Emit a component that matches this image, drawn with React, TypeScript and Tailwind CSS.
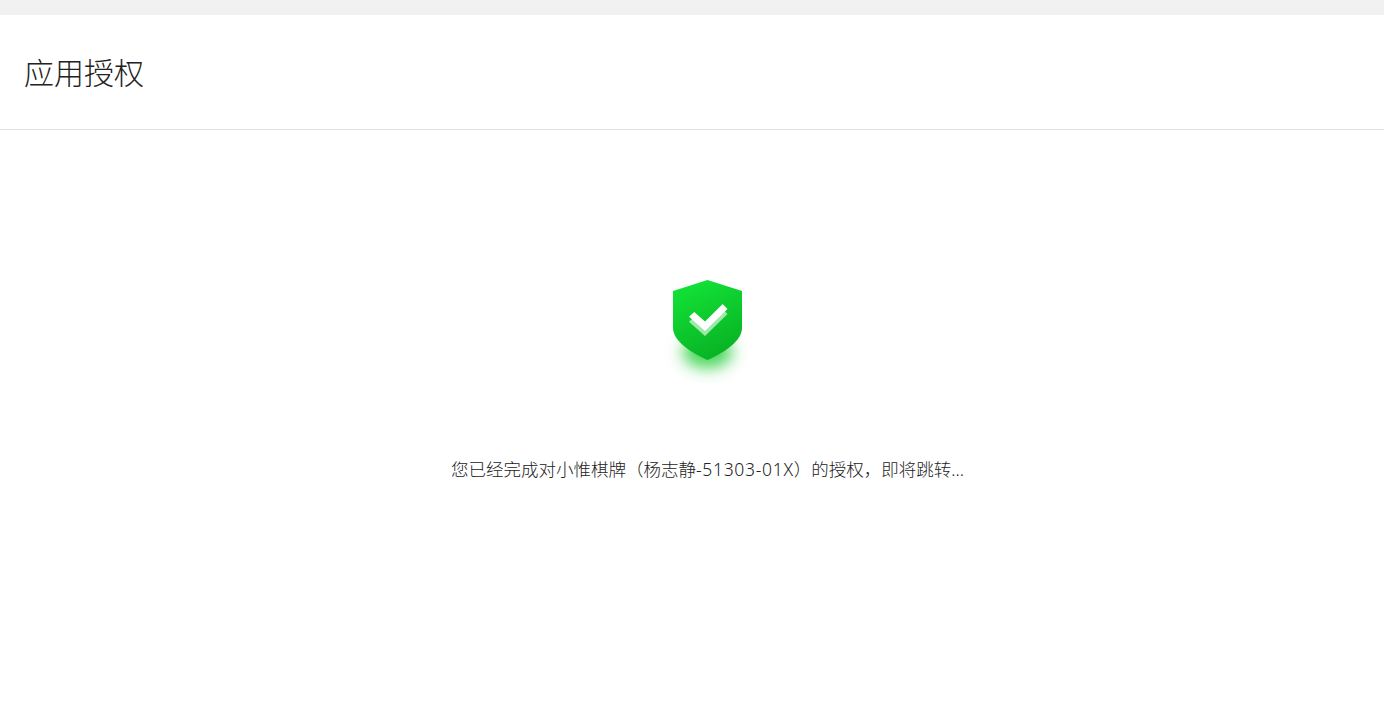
export default function App() {
  const font = { fontFamily: '"Noto Sans", "Noto Sans CJK SC", sans-serif' };
  return (
    <div className="min-h-[709px] bg-white flex flex-col text-[#222222]" style={font}>
      <div className="h-[15px] bg-[#f1f1f1]" />
      <div className="h-[115px] border-b border-[#e2e2e2] flex items-center px-6">
        <h1 className="text-[30px] font-light leading-none pt-[2px]">应用授权</h1>
      </div>
      <div className="flex flex-col items-center pt-[135px] pl-[31px]">
        <svg width="115" height="125" viewBox="0 0 115 125" className="block">
          <defs>
            <linearGradient id="g" x1="0.3" y1="0" x2="0.7" y2="1">
              <stop offset="0" stopColor="#12e236" />
              <stop offset="1" stopColor="#08b024" />
            </linearGradient>
            <filter id="b" x="-60%" y="-60%" width="220%" height="220%">
              <feGaussianBlur stdDeviation="8" />
            </filter>
          </defs>
          <ellipse cx="57.5" cy="87" rx="25" ry="16" fill="#30d044" opacity="0.9" filter="url(#b)" />
          <path d="M57.5 15 L92 26 V63 C92 75 76 87 57.5 95 C39 87 23 75 23 63 V26 Z" fill="url(#g)" />
          <path d="M39 56.7 L44.3 52 L55 61.5 L72.7 44 L77.5 49 L55 71 Z" fill="#ffffff" opacity="0.6" />
          <path d="M39 51.7 L44.3 47 L55 56.5 L72.7 39 L77.5 44 L55 66 Z" fill="#ffffff" />
        </svg>
        <p className="mt-[67px] text-[17.5px] font-light leading-6">
          您已经完成对小惟棋牌（杨志静<span className="tracking-[0.7px]">-51303-01X</span>）的授权，即将跳转...
        </p>
      </div>
    </div>
  );
}
